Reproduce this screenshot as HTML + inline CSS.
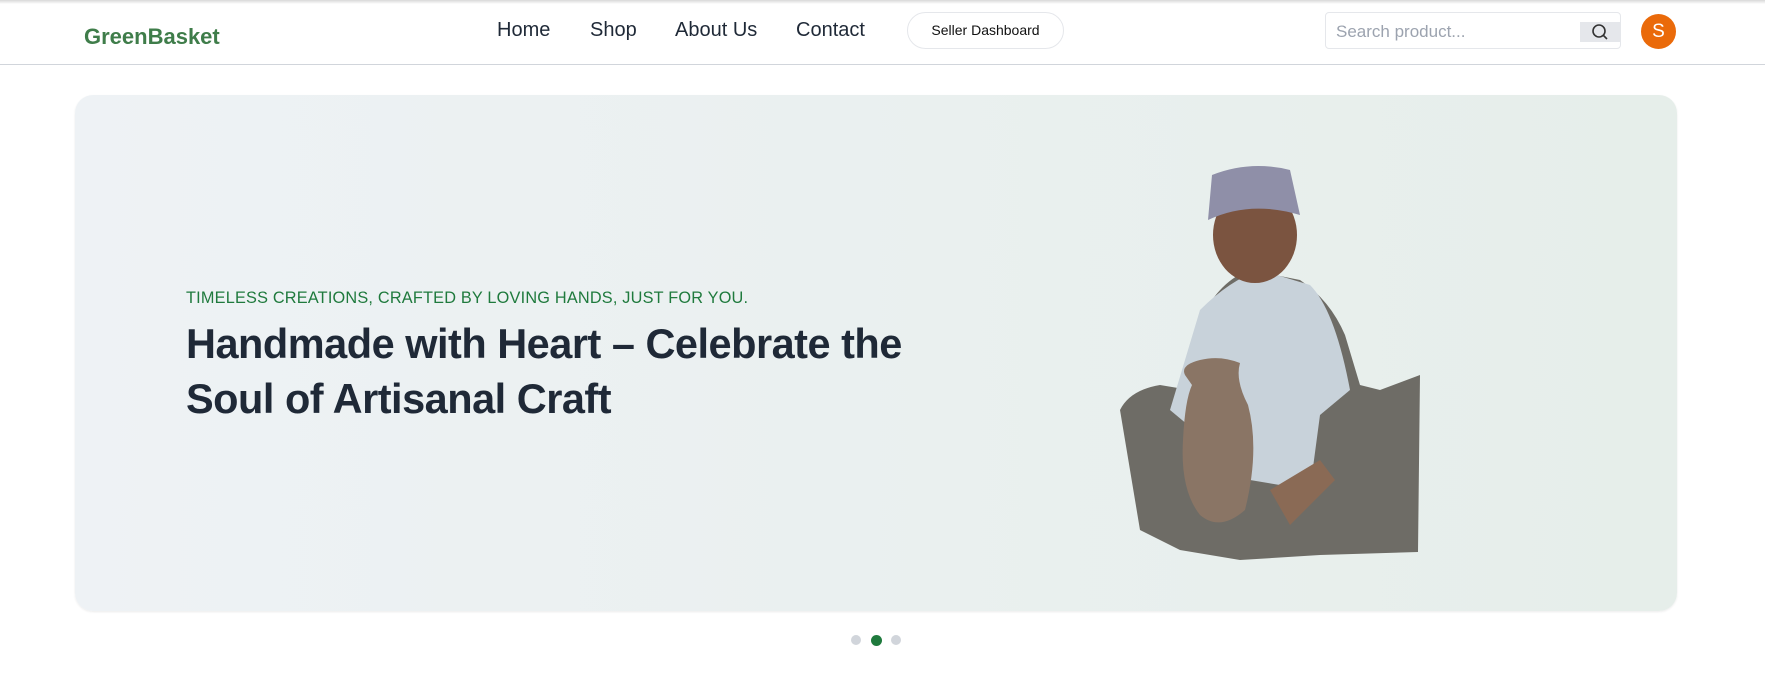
<!DOCTYPE html>
<html><head><meta charset="utf-8"><style>
*{margin:0;padding:0;box-sizing:border-box}
body{width:1765px;height:683px;background:#fff;font-family:"Liberation Sans",sans-serif;position:relative;overflow:hidden}
.top{position:absolute;left:0;top:0;width:1765px;height:4px;background:linear-gradient(#d8d8d8,#fff)}
.nav{position:absolute;left:0;top:0;width:1765px;height:65px;border-bottom:1px solid #d1d5db}
.logo{position:absolute;left:84px;top:24px;font-size:22px;font-weight:bold;color:#3f7d4a}
.link{position:absolute;top:19px;font-size:20px;color:#1f2937}
.pill{position:absolute;left:907px;top:12px;width:157px;height:37px;border:1px solid #e5e7eb;border-radius:19px;font-size:14px;color:#111;text-align:center;line-height:35px}
.search{position:absolute;left:1325px;top:12px;width:296px;height:37px;border:1px solid #e5e7eb;border-radius:4px}
.search span{position:absolute;left:10px;top:9px;font-size:17px;color:#9ca3af}
.sbtn{position:absolute;right:0;top:9px;width:40px;height:20px;background:#e5e7eb}
.av{position:absolute;left:1641px;top:14px;width:35px;height:35px;border-radius:50%;background:#ea6a0a;color:#fff;text-align:center;line-height:35px;font-size:19px}
.hero{position:absolute;left:75px;top:95px;width:1602px;height:516px;border-radius:18px;background:linear-gradient(90deg,#eef2f5,#e6eeea);box-shadow:0 1px 2px rgba(0,0,0,.08)}
.sub{position:absolute;left:186px;top:289px;font-size:16.3px;color:#1f7a3d;letter-spacing:.2px}
h1{position:absolute;left:186px;top:316px;font-size:41.5px;line-height:55px;color:#1f2937;font-weight:bold;letter-spacing:-.5px}
.dot{position:absolute;top:635px;width:10px;height:10px;border-radius:50%;background:#d1d5db}
</style></head><body>
<div class="nav"></div><div class="top"></div>
<div class="logo">GreenBasket</div>
<div class="link" style="left:497px">Home</div>
<div class="link" style="left:590px">Shop</div>
<div class="link" style="left:675px">About Us</div>
<div class="link" style="left:796px">Contact</div>
<div class="pill">Seller Dashboard</div>
<div class="search"><span>Search product...</span><div class="sbtn"><svg width="40" height="20" viewBox="0 0 40 20"><circle cx="19" cy="9" r="6" fill="none" stroke="#333" stroke-width="1.6"/><line x1="23.5" y1="13.5" x2="27" y2="17" stroke="#333" stroke-width="1.6"/></svg></div></div>
<div class="av">S</div>
<div class="hero"></div>
<div class="sub">TIMELESS CREATIONS, CRAFTED BY LOVING HANDS, JUST FOR YOU.</div>
<h1>Handmade with Heart – Celebrate the<br>Soul of Artisanal Craft</h1>
<svg style="position:absolute;left:1120px;top:160px" width="300" height="410" viewBox="0 0 300 410">
<path d="M0 250 Q10 230 40 225 L70 230 L80 160 Q100 120 130 110 L180 120 Q210 140 225 175 L240 225 L260 230 L300 215 L298 392 L200 395 L120 400 L60 390 L20 370 Z" fill="#6e6c66"/>
<path d="M50 250 L80 150 Q110 120 140 110 L190 125 Q215 150 230 230 L200 255 L190 330 L130 320 L80 275 Z" fill="#c8d2da"/>
<ellipse cx="135" cy="75" rx="42" ry="48" fill="#7b5440"/>
<path d="M88 60 L92 15 Q130 0 170 10 L180 55 Q130 40 88 60Z" fill="#8f8fa8"/>
<path d="M65 215 Q60 205 80 200 Q100 195 120 203 Q115 220 128 245 Q140 290 125 350 Q100 372 80 355 Q60 330 63 280 Q65 240 72 225Z" fill="#8a7565"/>
<path d="M150 330 L200 300 L215 320 L170 365 Z" fill="#8a6a55"/>
</svg>
<div class="dot" style="left:851px"></div>
<div class="dot" style="left:871px;background:#1f7a3d;width:11px;height:11px"></div>
<div class="dot" style="left:891px"></div>
</body></html>
